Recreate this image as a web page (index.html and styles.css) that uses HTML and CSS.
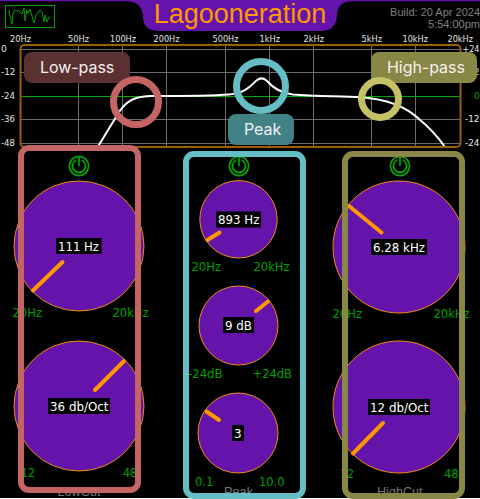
FILE: index.html
```html
<!DOCTYPE html>
<html lang="en">
<head>
<meta charset="utf-8">
<title>Lagooneration</title>
<link rel="stylesheet" href="styles.css">
</head>
<body>
<svg class="defs" width="0" height="0"><defs>
<symbol id="power" viewBox="0 0 24 24"><circle cx="12" cy="12" r="9.6"/><path d="M9.2 6A6.5 6.500 0 1 0 14.800 6M12 3v9"/></symbol>
</defs></svg>
<main class="stage">
<div class="plugin">
<header class="header">
<svg class="tab" width="480" height="35"><path d="M0 0H480V1.2H354C341 1 337 7 337 16C336 25 332 31 320 31H160C147 31 143 25 143 16C142 7 138 1 125 1.2H0Z"/></svg>
<svg class="scope" width="51" height="24"><rect x=".5" y=".5" width="49" height="22"/><path d="M4 5L5 11L7 19L8 9L10 5L14 6L17 9L19 3L20 16L22 5L23 8L25 4L27 11L29 18L31 10L33 8L35 5L37 7L39 17L40 10L42 17L44 12L45 12"/></svg>
<h1 class="title">Lagooneration</h1>
<p class="build">Build: 20 Apr 2024<br>5:54:00pm</p>
</header>
<svg class="graph" width="480" height="115" viewBox="0 35 480 115">
<g class="axis">
<text x="10" y="42" textLength="21" lengthAdjust="spacingAndGlyphs">20Hz</text><text x="68" y="42" textLength="21" lengthAdjust="spacingAndGlyphs">50Hz</text><text x="110" y="42" textLength="26" lengthAdjust="spacingAndGlyphs">100Hz</text><text x="153.500" y="42" textLength="26" lengthAdjust="spacingAndGlyphs">200Hz</text><text x="212.500" y="42" textLength="26" lengthAdjust="spacingAndGlyphs">500Hz</text><text x="259.500" y="42" textLength="20.500" lengthAdjust="spacingAndGlyphs">1kHz</text><text x="303.500" y="42" textLength="20.500" lengthAdjust="spacingAndGlyphs">2kHz</text><text x="361.500" y="42" textLength="20.500" lengthAdjust="spacingAndGlyphs">5kHz</text><text x="402.500" y="42" textLength="25.500" lengthAdjust="spacingAndGlyphs">10kHz</text><text x="447.500" y="42" textLength="25.500" lengthAdjust="spacingAndGlyphs">20kHz</text>
<text x="1" y="52">0</text><text x="1" y="75" textLength="14.500" lengthAdjust="spacingAndGlyphs">-12</text><text x="1" y="99" textLength="14" lengthAdjust="spacingAndGlyphs">-24</text><text x="1" y="122" textLength="14" lengthAdjust="spacingAndGlyphs">-36</text><text x="1" y="146" textLength="14" lengthAdjust="spacingAndGlyphs">-48</text>
<text x="462.500" y="52" textLength="17" lengthAdjust="spacingAndGlyphs">+24</text><text x="462.500" y="75" textLength="17" lengthAdjust="spacingAndGlyphs">+12</text><text class="zero" x="474" y="99">0</text><text x="465" y="122" textLength="14.500" lengthAdjust="spacingAndGlyphs">-12</text><text x="465" y="146" textLength="14.500" lengthAdjust="spacingAndGlyphs">-24</text>
</g>
<path class="grid" d="M78.500 45V147M122.500 45V147M166.500 45V147M225.500 45V147M269.500 45V147M313.500 45V147M371.500 45V147M415.500 45V147M21 49.500H460M21 72.500H460M21 119.500H460M21 143.500H460"/>
<path class="mid" d="M21 96.500H460"/>
<path class="curve" d="M98 146.500L116 117C125 101 134 96.500 150 96C185 96 210 96 229 94.500C247 93 252 84 256.500 80.500Q262 76 267 81C273 88 280 93 293 94.500C315 96.500 340 96 361 97.300C385 99 405 106 419 119C430 128 438 137 445 147"/>
<rect class="frame" x="20.500" y="45" width="440" height="102" rx="4"/>
</svg>
<section class="columns">
<div class="column">
<svg class="power" width="24" height="24"><use href="#power"/></svg>
<svg class="knob" width="160" height="160" viewBox="0 180 160 160"><circle cx="79" cy="246" r="65"/><path d="M33 290.500L62.500 262"/><rect x="56" y="238" width="45.500" height="16"/><text class="value" x="58" y="251" textLength="41" lengthAdjust="spacingAndGlyphs">111 Hz</text><text x="12.500" y="317" textLength="29.500" lengthAdjust="spacingAndGlyphs">20Hz</text><text x="112.500" y="317" textLength="36" lengthAdjust="spacingAndGlyphs">20kHz</text></svg>
<svg class="knob" width="160" height="160" viewBox="0 340 160 160"><circle cx="79" cy="406" r="65"/><path d="M95 390L124 361"/><rect x="48" y="398" width="62" height="16"/><text class="value" x="50" y="411" textLength="58.500" lengthAdjust="spacingAndGlyphs">36 db/Oct</text><text x="21" y="477" textLength="14" lengthAdjust="spacingAndGlyphs">12</text><text x="123" y="477" textLength="14" lengthAdjust="spacingAndGlyphs">48</text><text class="name" x="57.500" y="496" textLength="43" lengthAdjust="spacingAndGlyphs">LowCut</text></svg>
</div>
<div class="column narrow">
<svg class="power" width="24" height="24"><use href="#power"/></svg>
<svg class="knob" width="160" height="106" viewBox="160 175 160 106"><circle cx="238.500" cy="219.300" r="38.700"/><path d="M207.500 240L219.500 232.500"/><rect x="216" y="211.500" width="45" height="16"/><text class="value" x="218" y="224" textLength="41.500" lengthAdjust="spacingAndGlyphs">893 Hz</text><text x="191.500" y="271" textLength="29.500" lengthAdjust="spacingAndGlyphs">20Hz</text><text x="253.500" y="271" textLength="36" lengthAdjust="spacingAndGlyphs">20kHz</text></svg>
<svg class="knob" width="160" height="106" viewBox="160 281 160 106"><circle cx="238.500" cy="325.500" r="39.500"/><path d="M256 311L268 301.500"/><rect x="223" y="317" width="31" height="16"/><text class="value" x="225" y="330" textLength="27" lengthAdjust="spacingAndGlyphs">9 dB</text><text x="188" y="378" textLength="34.500" lengthAdjust="spacingAndGlyphs">-24dB</text><text x="252.500" y="378" textLength="39.500" lengthAdjust="spacingAndGlyphs">+24dB</text></svg>
<svg class="knob" width="160" height="111" viewBox="160 387 160 111"><circle cx="238" cy="433" r="40"/><path d="M206.500 411.500L219 420"/><rect x="232" y="425" width="12" height="16"/><text class="value" x="234" y="438">3</text><text x="195" y="486" textLength="18.500" lengthAdjust="spacingAndGlyphs">0.1</text><text x="259" y="486" textLength="25.500" lengthAdjust="spacingAndGlyphs">10.0</text><text class="name" x="224" y="495.500" textLength="29" lengthAdjust="spacingAndGlyphs">Peak</text></svg>
</div>
<div class="column">
<svg class="power" width="24" height="24"><use href="#power"/></svg>
<svg class="knob" width="160" height="160" viewBox="320 180 160 160"><circle cx="399" cy="247" r="66"/><path d="M349 206L381.500 232.500"/><rect x="371" y="239" width="56" height="16"/><text class="value" x="373" y="252" textLength="52" lengthAdjust="spacingAndGlyphs">6.28 kHz</text><text x="332.500" y="318" textLength="29.500" lengthAdjust="spacingAndGlyphs">20Hz</text><text x="433.500" y="318" textLength="36" lengthAdjust="spacingAndGlyphs">20kHz</text></svg>
<svg class="knob" width="160" height="160" viewBox="320 340 160 160"><circle cx="399" cy="407" r="66"/><path d="M353 453.500L383 423"/><rect x="368" y="399" width="62" height="16"/><text class="value" x="370" y="412" textLength="58.500" lengthAdjust="spacingAndGlyphs">12 db/Oct</text><text x="340" y="478" textLength="14" lengthAdjust="spacingAndGlyphs">12</text><text x="444" y="478" textLength="14.500" lengthAdjust="spacingAndGlyphs">48</text><text class="name" x="377" y="495.500" textLength="45.500" lengthAdjust="spacingAndGlyphs">HighCut</text></svg>
</div>
</section>
</div>
<div class="outline low"></div><div class="outline peak"></div><div class="outline high"></div>
<div class="tag low">Low-pass</div><div class="tag peak">Peak</div><div class="tag high">High-pass</div>
<div class="ring low"></div><div class="ring peak"></div><div class="ring high"></div>
</main>
</body>
</html>
```
FILE: styles.css
```css
* { box-sizing: border-box; }
body { margin: 0; background: #fff; }
.defs { position: absolute; }
.stage { position: relative; width: 480px; height: 499px; overflow: hidden; }
.plugin { height: 498px; background: #000; overflow: hidden; }
svg { display: block; }

.header { position: relative; display: grid; grid-template-columns: 142px 1fr 142px; height: 35px; }
.tab { position: absolute; inset: 0; fill: #6414aa; }
.scope { position: relative; margin: 5px 0 0 5px; fill: none; stroke: #00a000; stroke-width: 1; }
.title { position: relative; margin: -1px 0 0; text-align: center; white-space: nowrap; font: 27px/30px "Liberation Sans", Arial, sans-serif; color: #ff9800; }
.build { position: relative; margin: 6px 0 0; text-align: right; white-space: nowrap; font: 11px/12px "Liberation Sans", Arial, sans-serif; color: #808080; }

.axis text { font: 9px "DejaVu Sans", sans-serif; fill: #e4e4e4; }
.axis .zero { fill: #00a000; }
.grid { stroke: #6c6c6c; fill: none; }
.mid { stroke: #00a800; }
.curve { fill: none; stroke: #fff; stroke-width: 2; }
.frame { fill: none; stroke: #9a6000; stroke-width: 2; }

.columns { display: grid; grid-template-columns: repeat(3, 160px); }
.column { display: flex; flex-direction: column; height: 348px; padding-top: 4px; }
.power { flex: none; margin: 0 0 2px 66.5px; fill: none; stroke: #00a800; stroke-width: 1.7; }
.narrow .power { margin-bottom: -3px; }
.column:last-child .power { margin-left: 67.5px; }
.knob { flex: none; }
.knob circle { fill: #6414aa; stroke: #ee8e0c; stroke-width: 1; }
.knob path { stroke: #ff9800; stroke-width: 4; stroke-linecap: round; }
.knob rect { fill: #000; }
.knob text { font: 12px "DejaVu Sans", sans-serif; fill: #00a000; }
.knob .value { fill: #fff; }
.knob .name { font: 12px "Liberation Sans", Arial, sans-serif; fill: #777; }

.outline { position: absolute; width: 123px; height: 348px; border: 6px solid; border-radius: 11px; }
.outline.low { left: 18px; top: 145px; color: #c46464; }
.outline.peak { left: 183px; top: 151px; color: #65bec4; }
.outline.high { left: 342px; top: 151px; color: #888746; }

.ring { position: absolute; border: 7px solid; border-radius: 50%; }
.ring.low { left: 110px; top: 76px; width: 52px; height: 52px; color: #c46464; }
.ring.peak { left: 233px; top: 58px; width: 56px; height: 56px; color: #65bec4; }
.ring.high { left: 358px; top: 77px; width: 44px; height: 44px; color: #c5c164; }

.tag { position: absolute; height: 31px; padding-left: 16px; border-radius: 8px; white-space: nowrap; font: 16px/31px Inter, sans-serif; letter-spacing: -.05px; color: #f4f0f0; }
.tag.low { left: 24px; top: 52px; width: 106px; background: #5b3030; }
.tag.peak { left: 228px; top: 114px; width: 66px; background: #428287; }
.tag.high { left: 371px; top: 52px; width: 106px; background: #888746; }
```
